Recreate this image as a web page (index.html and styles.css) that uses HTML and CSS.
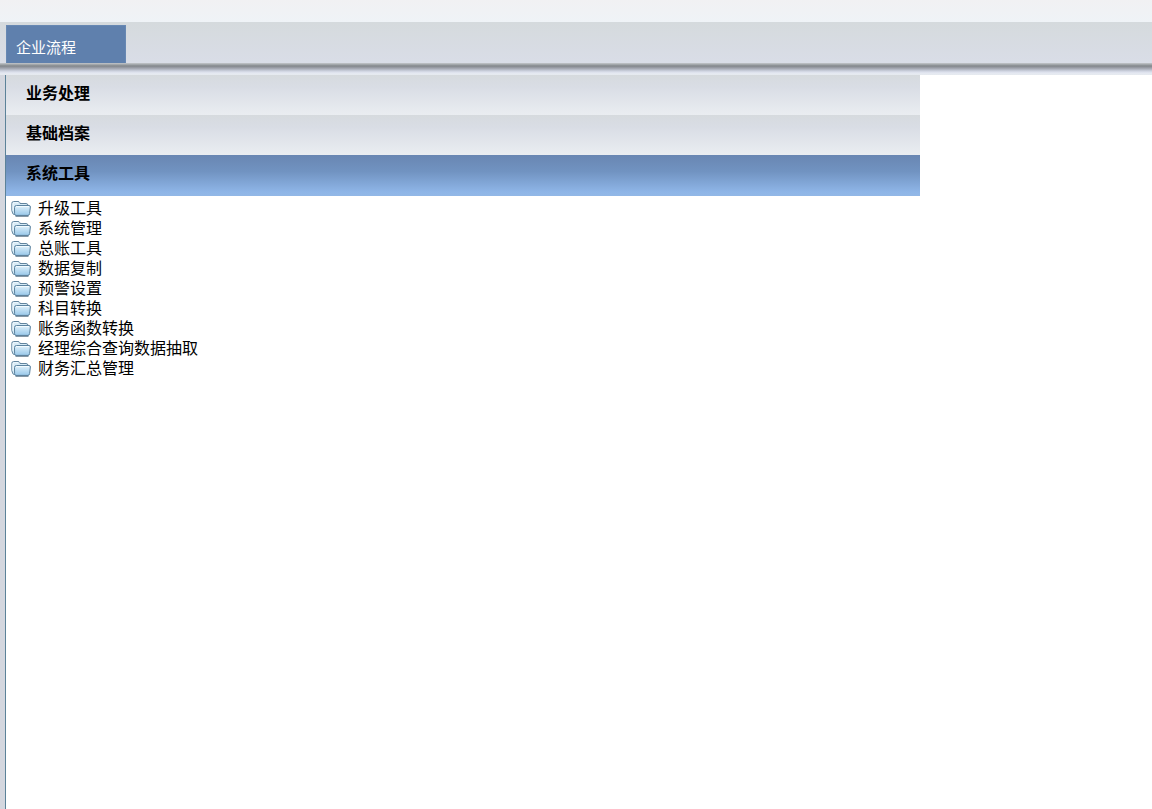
FILE: index.html
```html
<!DOCTYPE html>
<html lang="zh-CN">
<head>
  <meta charset="UTF-8">
  <meta name="viewport" content="width=device-width, initial-scale=1.0">
  <title>企业流程</title>
  <link rel="stylesheet" href="styles.css">
</head>
<body>

  <svg class="sprite" width="0" height="0" aria-hidden="true">
    <defs>
      <linearGradient id="folderFront" x1="0" y1="0" x2="0" y2="1">
        <stop offset="0" stop-color="#e0f1fb"/>
        <stop offset="1" stop-color="#98c8ea"/>
      </linearGradient>
    </defs>
    <symbol id="folder" viewBox="0 0 20 16">
      <path d="M4 13.5H3.2Q2 13.5 1.6 12L.8 9.5V2.5Q.8 .5 2.5 .5H7Q8.2 .5 8.7 1.5L9 2.5H15Q17 2.5 17 4.5V5" fill="#d6eaf6" stroke="#62859f"/>
      <path d="M2 9.5V3Q2 1.6 3.3 1.6H7" fill="none" stroke="#f2f9fd"/>
      <path d="M5.5 4.5H18Q19.5 4.5 19.4 6L18.6 12.5Q18.4 14.4 17 14.4H5Q3.7 14.4 3.6 12.8L3.5 6.5Q3.5 4.5 5.5 4.5Z" fill="url(#folderFront)" stroke="#5c839f"/>
      <path d="M5 5.6H18" stroke="#f4fbff"/>
      <path d="M4.5 15.2H17.5" stroke="#4f6b80"/>
    </symbol>
  </svg>

  <div class="topbar"></div>

  <nav class="tabs">
    <a class="tab" href="#">企业流程</a>
  </nav>
  <div class="divider"></div>

  <main class="content">
    <div class="accordion">
      <button class="section" type="button" aria-expanded="false">业务处理</button>
      <button class="section" type="button" aria-expanded="false">基础档案</button>
      <button class="section active" type="button" aria-expanded="true">系统工具</button>

      <ul class="folders">
        <li><a href="#"><svg class="icon"><use href="#folder"/></svg>升级工具</a></li>
        <li><a href="#"><svg class="icon"><use href="#folder"/></svg>系统管理</a></li>
        <li><a href="#"><svg class="icon"><use href="#folder"/></svg>总账工具</a></li>
        <li><a href="#"><svg class="icon"><use href="#folder"/></svg>数据复制</a></li>
        <li><a href="#"><svg class="icon"><use href="#folder"/></svg>预警设置</a></li>
        <li><a href="#"><svg class="icon"><use href="#folder"/></svg>科目转换</a></li>
        <li><a href="#"><svg class="icon"><use href="#folder"/></svg>账务函数转换</a></li>
        <li><a href="#"><svg class="icon"><use href="#folder"/></svg>经理综合查询数据抽取</a></li>
        <li><a href="#"><svg class="icon"><use href="#folder"/></svg>财务汇总管理</a></li>
      </ul>
    </div>
  </main>

</body>
</html>
```

FILE: styles.css
```css
* {
  box-sizing: border-box;
}

body {
  margin: 0;
  min-height: 100vh;
  display: flex;
  flex-direction: column;
  background: #d4d7df;
  color: #000;
  font-family: "Liberation Sans", "Noto Sans CJK SC", sans-serif;
  font-size: 16px;
}

.sprite {
  position: absolute;
}

.topbar {
  height: 22px;
  background: linear-gradient(#f1f1f3, #eff3f7);
}

.tabs {
  display: flex;
  padding: 3px 6px 0;
  background: linear-gradient(#d5dadd, #d9dde7);
}

.tab {
  width: 120px;
  padding: 10px 9px 4px;
  border: 1px solid #6788b3;
  border-bottom: none;
  background: #5f80ad;
  color: #fff;
  font-size: 15px;
  line-height: 23px;
  text-decoration: none;
}

.divider {
  height: 12px;
  background: linear-gradient(#c3c7cb, #82878b 3px, #8f929a 4px, #acb0bb 6px, #cdd2df 8px, #e4e8f2 10px, #e6eaef);
}

.content {
  flex: 1;
  margin-left: 5px;
  border-left: 1px solid #5c8299;
  background: #fff;
}

.accordion {
  margin-right: 232px;
}

.section {
  display: block;
  width: 100%;
  height: 40px;
  padding: 0 20px 6px;
  border: none;
  background: linear-gradient(#d6dade, #d9dde5 30%, #eaedf1);
  color: #000;
  font-family: inherit;
  font-size: 16px;
  font-weight: bold;
  text-align: left;
  cursor: pointer;
}

.section.active {
  height: 41px;
  padding-bottom: 8px;
  background: linear-gradient(#6986b2, #7193c1 40%, #8eb5e7 90%, #92b7e6);
}

.folders {
  list-style: none;
  margin: 0;
  padding: 3px 5px;
}

.folders a {
  display: flex;
  align-items: center;
  gap: 7px;
  color: #000;
  line-height: 20px;
  text-decoration: none;
}

.icon {
  width: 20px;
  height: 16px;
}
```
